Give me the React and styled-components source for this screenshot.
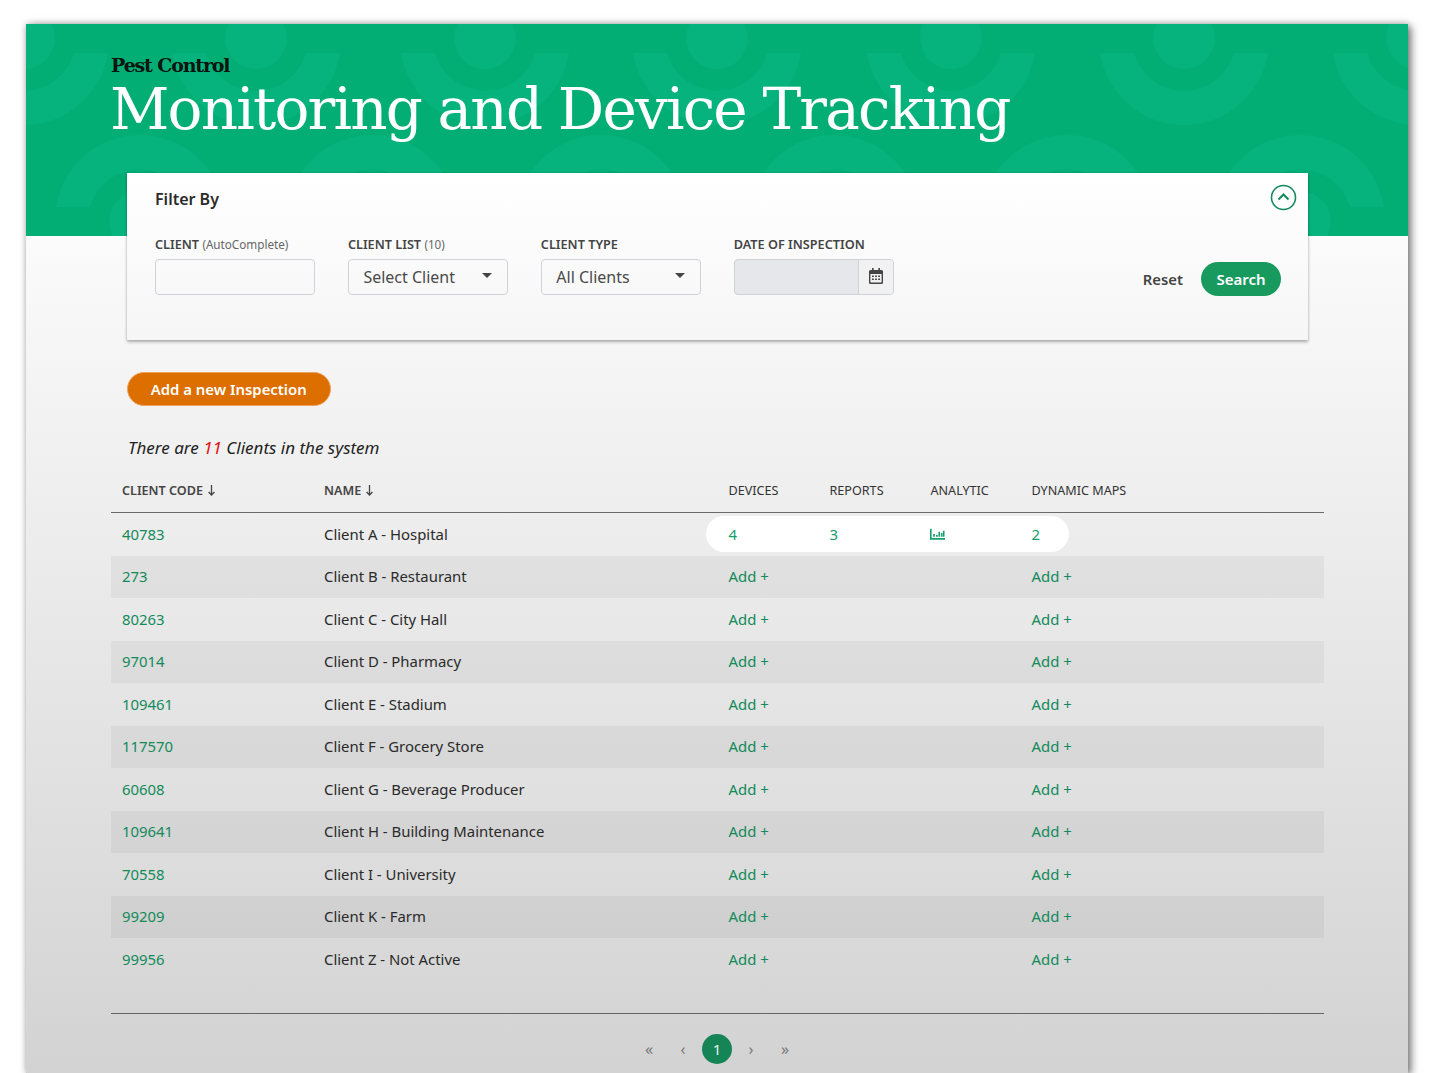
import React from 'react'
import styled, { createGlobalStyle } from 'styled-components'

const GlobalStyle = createGlobalStyle`
  html, body {
    margin: 0;
    padding: 0;
    background: #fff;
    font-family: 'Noto Sans', sans-serif;
    overflow: hidden;
  }
`

const Page = styled.div`
  height: 1073px;
  padding: 24px 26px 0;
  box-sizing: border-box;
  overflow: hidden;
`

const Window = styled.div`
  width: 1382px;
  height: 1049px;
  display: flex;
  flex-direction: column;
  background: linear-gradient(#fbfbfb 212px, #d2d2d2 1060px);
  box-shadow: 3px 2px 8px rgba(0, 0, 0, 0.55), -1px -1px 6px rgba(0, 0, 0, 0.12);
`

const Header = styled.header`
  position: relative;
  height: 212px;
  flex: none;
  padding: 29px 0 0 85px;
  box-sizing: border-box;
  background: #02ae74;
  overflow: hidden;
`

const Pattern = styled.svg`
  position: absolute;
  left: 0;
  top: 0;
`

const Eyebrow = styled.div`
  position: relative;
  font-family: 'DejaVu Serif', serif;
  font-weight: 700;
  font-size: 19px;
  line-height: 24px;
  letter-spacing: -1.15px;
  color: #0a1410;
`

const Title = styled.h1`
  position: relative;
  margin: 0 0 0 -1px;
  font-family: 'DejaVu Serif', serif;
  font-weight: 400;
  font-size: 58px;
  line-height: 64px;
  letter-spacing: -1.82px;
  color: #fff;
  white-space: nowrap;
`

const Content = styled.main`
  position: relative;
  margin-top: -63px;
  padding: 0 84px 0 85px;
`

const FilterCard = styled.section`
  position: relative;
  width: 1181px;
  height: 167px;
  margin-left: 16px;
  padding: 16px 28px 0;
  box-sizing: border-box;
  background: linear-gradient(#fff, #f6f6f6);
  box-shadow: 0 2px 3px rgba(0, 0, 0, 0.3), 0 0 1px rgba(0, 0, 0, 0.2);
`

const FilterTitle = styled.h2`
  margin: 0;
  font-size: 16px;
  line-height: 20px;
  font-weight: 600;
  color: #2b2b2b;
`

const CollapseButton = styled.button`
  position: absolute;
  top: 11px;
  right: 11px;
  width: 27px;
  height: 27px;
  padding: 0;
  border: 0;
  background: none;
`

const FilterRow = styled.div`
  display: flex;
  align-items: flex-start;
  gap: 32.5px;
  margin-top: 25.5px;
`

const Field = styled.div`
  width: 160.4px;
`

const FieldLabel = styled.div`
  height: 18px;
  font-size: 12.7px;
  line-height: 18px;
  font-weight: 600;
  color: #444;
  white-space: nowrap;
  margin-bottom: 6.5px;
`

const LabelHint = styled.span`
  font-size: 11.7px;
  font-weight: 400;
  color: #666;
`

const TextBox = styled.div`
  height: 36px;
  box-sizing: border-box;
  border: 1px solid #cfd2d6;
  border-radius: 4px;
  background: ${p => (p.$disabled ? '#e6e7ea' : 'transparent')};
`

const SelectBox = styled(TextBox)`
  display: flex;
  align-items: center;
  justify-content: space-between;
  padding: 0 15px 0 14.5px;
  font-size: 16px;
  color: #4a4a4a;
`

const Caret = styled.span`
  width: 0;
  height: 0;
  margin-top: -3px;
  border-left: 5px solid transparent;
  border-right: 5px solid transparent;
  border-top: 5px solid #444;
`

const DateBox = styled(TextBox)`
  display: flex;
  justify-content: flex-end;
`

const CalendarCell = styled.div`
  width: 35px;
  display: flex;
  align-items: flex-start;
  justify-content: center;
  padding-top: 8px;
  box-sizing: border-box;
  border-left: 1px solid #cfd2d6;
  background: #f1f1f2;
  border-radius: 0 3px 3px 0;
`

const FilterActions = styled.div`
  display: flex;
  align-items: center;
  gap: 18px;
  margin-left: auto;
  margin-top: 27px;
  margin-right: -1px;
`

const ResetLink = styled.span`
  font-size: 14.8px;
  font-weight: 600;
  color: #444;
`

const SearchButton = styled.button`
  width: 80px;
  height: 34px;
  border: 0;
  border-radius: 17px;
  background: #189a5f;
  color: #fff;
  font-family: inherit;
  font-size: 15px;
  font-weight: 600;
`

const AddButton = styled.button`
  display: block;
  width: 203.5px;
  height: 34px;
  margin: 32px 0 0 16px;
  box-sizing: border-box;
  border: 1px solid #eda35b;
  border-radius: 17px;
  background: #dd6e00;
  color: #fff;
  font-family: inherit;
  font-size: 14.9px;
  font-weight: 600;
`

const CountLine = styled.p`
  margin: 31px 0 0 17px;
  font-size: 17px;
  line-height: 22px;
  font-style: italic;
  color: #222;
`

const Count = styled.span`
  color: #e01010;
`

const Table = styled.div`
  margin-top: 10px;
  width: 1213px;
  border-bottom: 1.5px solid #666;
`

const Columns = `
  display: grid;
  grid-template-columns: 202px 404.5px 101px 101px 101px 1fr;
  align-items: center;
`

const HeadRow = styled.div`
  ${Columns}
  height: 44px;
  box-sizing: border-box;
  padding-bottom: 1px;
  border-bottom: 1.5px solid #6a6a6a;
  font-size: 12.6px;
`

const HeadCell = styled.div`
  display: flex;
  align-items: center;
  gap: 5px;
  padding-left: 11px;
  font-weight: ${p => (p.$sort ? 600 : 400)};
  color: ${p => (p.$sort ? '#444' : '#333')};
  white-space: nowrap;
`

const Rows = styled.div`
  padding-bottom: 32px;
`

const Row = styled.div`
  ${Columns}
  height: 42.5px;
  font-size: 14.9px;
  color: #2a2a2a;
  background: ${p => (p.$striped ? 'rgba(0, 0, 0, 0.045)' : 'transparent')};
`

const Cell = styled.div`
  padding: 0 0 1px 11px;
  white-space: nowrap;
`

const LinkCell = styled(Cell)`
  color: #128a5a;
`

const HighlightPill = styled.div`
  grid-column: 3 / 7;
  width: 363px;
  height: 36px;
  margin-left: -11.5px;
  padding-left: 11.5px;
  box-sizing: border-box;
  display: grid;
  grid-template-columns: 101px 101px 101px 1fr;
  align-items: center;
  border-radius: 18px;
  background: #fff;
  color: #14a06a;
`

const Pagination = styled.nav`
  display: flex;
  justify-content: center;
  align-items: center;
  margin-top: 20px;
  padding-right: 1px;
  font-size: 16px;
  color: #777;
`

const PageArrow = styled.span`
  width: 34px;
  text-align: center;
`

const PageCurrent = styled.span`
  width: 30px;
  height: 30px;
  margin: 0 2px;
  display: flex;
  align-items: center;
  justify-content: center;
  border-radius: 50%;
  background: #158456;
  color: #e8efe9;
  font-size: 15px;
`

const TILE_X = [24, 256, 485, 717, 951, 1184, 1417]
const ARCH_X = [140, 372, 601, 834, 1067, 1300]

function HeaderPattern() {
  // concentric rings, the lower row is the same shape turned upside down
  return (
    <Pattern width="1382" height="212" viewBox="26 24 1382 212" fill="#06b37c">
      {TILE_X.map(x => (
        <g key={x}>
          <circle cx={x} cy="38" r="31" />
          <path d={`M${x - 84} 53 A85 85 0 0 0 ${x + 84} 53 L${x + 50} 53 A52 52 0 0 1 ${x - 50} 53 Z`} />
        </g>
      ))}
      {ARCH_X.map(x => (
        <g key={x}>
          <circle cx={x} cy="222" r="31" />
          <path d={`M${x - 84} 207 A85 85 0 0 1 ${x + 84} 207 L${x + 50} 207 A52 52 0 0 0 ${x - 50} 207 Z`} />
        </g>
      ))}
    </Pattern>
  )
}

function CollapseIcon() {
  return (
    <svg width="27" height="27" viewBox="0 0 27 27" fill="none" stroke="#128a5a">
      <circle cx="13.5" cy="13.5" r="12" strokeWidth="1.6" />
      <path d="M8.5 15.5 L13.5 10.5 L18.5 15.5" strokeWidth="2" />
    </svg>
  )
}

function CalendarIcon() {
  return (
    <svg width="14" height="16" viewBox="0 0 14 16" fill="#444">
      <path d="M3 0h1.6v2h4.8V0H11v2h1.5A1.5 1.5 0 0 1 14 3.5v11a1.5 1.5 0 0 1-1.5 1.5h-11A1.5 1.5 0 0 1 0 14.5v-11A1.5 1.5 0 0 1 1.5 2H3zM1.4 6v8.1c0 .3.2.5.5.5h10.2c.3 0 .5-.2.5-.5V6z" />
      <path d="M3 7.4h1.8v1.6H3zM6.1 7.4h1.8v1.6H6.1zM9.2 7.4H11v1.6H9.2zM3 10.4h1.8V12H3zM6.1 10.4h1.8V12H6.1zM9.2 10.4H11V12H9.2z" />
    </svg>
  )
}

function ChartIcon() {
  return (
    <svg width="15" height="12" viewBox="0 0 16 12" fill="#14a06a" style={{ display: 'block', marginLeft: '-1px' }}>
      <path d="M0 .5h1.7v9.7H16V12H0z" />
      <path d="M3.4 6h1.8v3H3.4zM6.4 7h1.8v2H6.4zM9 3.5h1.8V9H9zM11.8 5h1.6v4h-1.6zM13.8 2.5h1.7V9h-1.7z" />
    </svg>
  )
}

function SortArrow() {
  return (
    <svg width="7" height="11" viewBox="0 0 7 11" fill="none" stroke="#444" strokeWidth="1.3">
      <path d="M3.5 0v10M.6 7l2.9 3 2.9-3" />
    </svg>
  )
}

const CLIENTS = [
  ['273', 'Client B - Restaurant'],
  ['80263', 'Client C - City Hall'],
  ['97014', 'Client D - Pharmacy'],
  ['109461', 'Client E - Stadium'],
  ['117570', 'Client F - Grocery Store'],
  ['60608', 'Client G - Beverage Producer'],
  ['109641', 'Client H - Building Maintenance'],
  ['70558', 'Client I - University'],
  ['99209', 'Client K - Farm'],
  ['99956', 'Client Z - Not Active'],
]

export default function App() {
  return (
    <Page>
      <GlobalStyle />
      <Window>
        <Header>
          <HeaderPattern />
          <Eyebrow>Pest Control</Eyebrow>
          <Title>Monitoring and Device Tracking</Title>
        </Header>

        <Content>
          <FilterCard>
            <FilterTitle>Filter By</FilterTitle>
            <CollapseButton aria-label="Collapse">
              <CollapseIcon />
            </CollapseButton>
            <FilterRow>
              <Field>
                <FieldLabel>CLIENT <LabelHint>(AutoComplete)</LabelHint></FieldLabel>
                <TextBox />
              </Field>
              <Field>
                <FieldLabel>CLIENT LIST <LabelHint>(10)</LabelHint></FieldLabel>
                <SelectBox>Select Client<Caret /></SelectBox>
              </Field>
              <Field>
                <FieldLabel>CLIENT TYPE</FieldLabel>
                <SelectBox>All Clients<Caret /></SelectBox>
              </Field>
              <Field>
                <FieldLabel>DATE OF INSPECTION</FieldLabel>
                <DateBox $disabled>
                  <CalendarCell><CalendarIcon /></CalendarCell>
                </DateBox>
              </Field>
              <FilterActions>
                <ResetLink>Reset</ResetLink>
                <SearchButton>Search</SearchButton>
              </FilterActions>
            </FilterRow>
          </FilterCard>

          <AddButton>Add a new Inspection</AddButton>
          <CountLine>There are <Count>11</Count> Clients in the system</CountLine>

          <Table>
            <HeadRow>
              <HeadCell $sort>CLIENT CODE <SortArrow /></HeadCell>
              <HeadCell $sort>NAME <SortArrow /></HeadCell>
              <HeadCell>DEVICES</HeadCell>
              <HeadCell>REPORTS</HeadCell>
              <HeadCell>ANALYTIC</HeadCell>
              <HeadCell>DYNAMIC MAPS</HeadCell>
            </HeadRow>
            <Rows>
              <Row>
                <LinkCell>40783</LinkCell>
                <Cell>Client A - Hospital</Cell>
                <HighlightPill>
                  <Cell>4</Cell>
                  <Cell>3</Cell>
                  <Cell><ChartIcon /></Cell>
                  <Cell>2</Cell>
                </HighlightPill>
              </Row>
              {CLIENTS.map(([code, name], i) => (
                <Row key={code} $striped={i % 2 === 0}>
                  <LinkCell>{code}</LinkCell>
                  <Cell>{name}</Cell>
                  <LinkCell>Add +</LinkCell>
                  <Cell />
                  <Cell />
                  <LinkCell>Add +</LinkCell>
                </Row>
              ))}
            </Rows>
          </Table>

          <Pagination>
            <PageArrow>«</PageArrow>
            <PageArrow>‹</PageArrow>
            <PageCurrent>1</PageCurrent>
            <PageArrow>›</PageArrow>
            <PageArrow>»</PageArrow>
          </Pagination>
        </Content>
      </Window>
    </Page>
  )
}
